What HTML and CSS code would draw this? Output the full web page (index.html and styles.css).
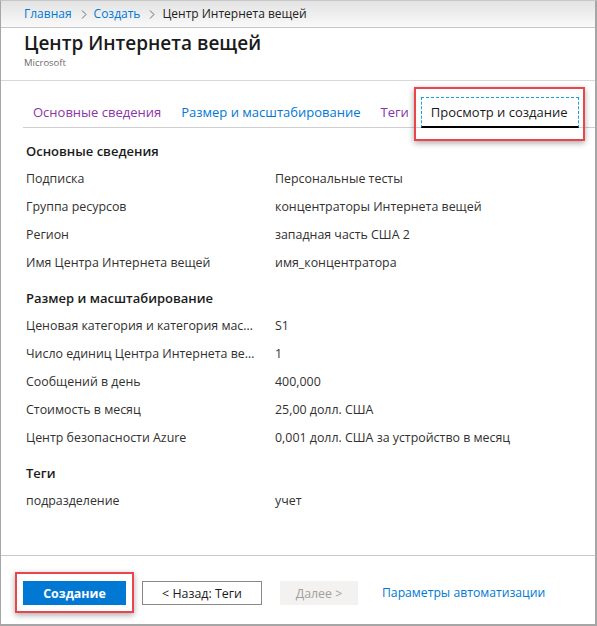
FILE: index.html
```html
<!DOCTYPE html>
<html lang="ru">
<head>
<meta charset="utf-8">
<title>Центр Интернета вещей</title>
<link rel="stylesheet" href="styles.css">
</head>
<body>
<div class="frame">
  <nav class="breadcrumb">
    <a class="crumb-link" href="#">Главная</a>
    <svg class="sep" width="6" height="9" viewBox="0 0 6 9"><polyline points="1,0.5 5,4.5 1,8.5" fill="none" stroke="#6b6b6b" stroke-width="1"/></svg>
    <a class="crumb-link" href="#">Создать</a>
    <svg class="sep" width="6" height="9" viewBox="0 0 6 9"><polyline points="1,0.5 5,4.5 1,8.5" fill="none" stroke="#6b6b6b" stroke-width="1"/></svg>
    <span class="crumb-current">Центр Интернета вещей</span>
  </nav>
  <header class="header">
    <h1 class="title">Центр Интернета вещей</h1>
    <div class="publisher">Microsoft</div>
  </header>
  <div class="tabs-wrap">
    <div class="tabs">
      <span class="tab visited">Основные сведения</span>
      <span class="tab link">Размер и масштабирование</span>
      <span class="tab visited">Теги</span>
      <span class="tab active">Просмотр и создание<span class="highlight tab-hl"></span></span>
    </div>
  </div>
  <main class="content">
    <section class="section">
      <h2 class="section-title">Основные сведения</h2>
      <div class="row"><span class="label">Подписка</span><span class="value">Персональные тесты</span></div>
      <div class="row"><span class="label">Группа ресурсов</span><span class="value">концентраторы Интернета вещей</span></div>
      <div class="row"><span class="label">Регион</span><span class="value">западная часть США 2</span></div>
      <div class="row"><span class="label">Имя Центра Интернета вещей</span><span class="value">имя_концентратора</span></div>
    </section>
    <section class="section">
      <h2 class="section-title">Размер и масштабирование</h2>
      <div class="row"><span class="label">Ценовая категория и категория масштабирования</span><span class="value">S1</span></div>
      <div class="row"><span class="label">Число единиц Центра Интернета вещей</span><span class="value">1</span></div>
      <div class="row"><span class="label">Сообщений в день</span><span class="value">400,000</span></div>
      <div class="row"><span class="label">Стоимость в месяц</span><span class="value">25,00 долл. США</span></div>
      <div class="row"><span class="label">Центр безопасности Azure</span><span class="value">0,001 долл. США за устройство в месяц</span></div>
    </section>
    <section class="section">
      <h2 class="section-title">Теги</h2>
      <div class="row"><span class="label">подразделение</span><span class="value">учет</span></div>
    </section>
  </main>
  <footer class="footer">
    <button class="btn btn-primary">Создание<span class="highlight btn-hl"></span></button>
    <button class="btn btn-default">&lt; Назад: Теги</button>
    <button class="btn btn-disabled">Далее &gt;</button>
    <a class="footer-link" href="#">Параметры автоматизации</a>
  </footer>
</div>
</body>
</html>
```
FILE: styles.css
```css
* { box-sizing: border-box; }
html, body { margin: 0; padding: 0; background: #fff; }
body {
  font-family: "Open Sans", "Noto Sans", sans-serif;
  font-size: 12.4px;
  color: #323130;
}
.frame {
  width: 597px;
  height: 626px;
  display: flex;
  flex-direction: column;
  border-left: 1px solid #a6a6a6;
  border-right: 2px solid #a6a6a6;
  border-bottom: 2px solid #a6a6a6;
  border-top: 1px solid #c8c8c8;
  overflow: hidden;
}
.breadcrumb {
  height: 27px;
  flex: none;
  display: flex;
  align-items: center;
  padding-left: 23px;
  background: linear-gradient(#e3e3e3, #f9f9f9);
  border-bottom: 1px solid #c6c6c6;
  font-size: 12px;
  line-height: 1;
}
.crumb-link { color: #0078d4; text-decoration: none; }
.sep { margin: 1px 7px 0 9px; flex: none; }
.crumb-current { color: #222; }
.header {
  flex: none;
  height: 53px;
  padding: 3px 0 0 23px;
  border-bottom: 1px solid #d8d8d8;
}
.title {
  margin: 0;
  font-size: 19px;
  font-weight: 600;
  line-height: 25px;
  color: #1b1b1b;
}
.publisher {
  font-size: 9.5px;
  color: #6b6b6b;
  line-height: 12px;
  margin-top: 1px;
}
.tabs-wrap {
  flex: none;
  padding: 16px 0 0 22px;
}
.tabs {
  display: flex;
  align-items: stretch;
  border-bottom: 1px solid #cfcfcf;
  height: 31px;
  font-size: 13px;
}
.tab {
  position: relative;
  display: flex;
  align-items: center;
  padding: 0 10px;
  height: 30px;
  white-space: nowrap;
}
.tab.visited { color: #8a34a8; }
.tab.link { color: #0078d4; }
.tab.active {
  margin-left: 2px;
  color: #1b1b1b;
  border: 1px dashed #1aa0dc;
  border-bottom: 2px solid #000;
  height: 31px;
  padding: 0 10px 0 9px;
}
.highlight {
  position: absolute;
  border: 2px solid #e8454d;
  box-shadow: 0 2px 6px rgba(0, 0, 0, 0.35);
  pointer-events: none;
}
.tab-hl { left: -8px; right: -7px; top: -11px; bottom: -15px; }
.content {
  flex: 1;
  padding: 9px 0 0 25px;
}
.section + .section { margin-top: 7px; }
.section-title {
  margin: 0;
  font-size: 13px;
  font-weight: 600;
  line-height: 28px;
  color: #1b1b1b;
}
.row {
  display: flex;
  line-height: 28px;
  color: #323130;
}
.label {
  width: 229px;
  flex: none;
  white-space: nowrap;
  overflow: hidden;
  text-overflow: ellipsis;
  margin-right: 20px;
}
.value { white-space: nowrap; }
.footer {
  flex: none;
  height: 69px;
  border-top: 1px solid #c8c8c8;
  display: flex;
  align-items: flex-start;
  padding: 25px 0 0 22px;
}
.btn {
  position: relative;
  height: 24px;
  font-family: inherit;
  font-size: 12.4px;
  padding: 0;
  margin: 0;
  border-radius: 0;
  display: flex;
  align-items: center;
  justify-content: center;
}
.btn-primary {
  width: 103px;
  background: #0078d4;
  color: #fff;
  border: 1px solid #0078d4;
  font-weight: 700;
}
.btn-hl { left: -9px; right: -9px; top: -10px; bottom: -9px; }
.btn-default {
  width: 120px;
  margin-left: 16px;
  background: #fff;
  color: #1b1b1b;
  border: 1px solid #8a8886;
}
.btn-disabled {
  width: 78px;
  margin-left: 18px;
  background: #f3f2f1;
  color: #a19f9d;
  border: 1px solid #f3f2f1;
}
.footer-link {
  margin-left: 24px;
  line-height: 24px;
  color: #0078d4;
  text-decoration: none;
  font-size: 12.2px;
}
```
